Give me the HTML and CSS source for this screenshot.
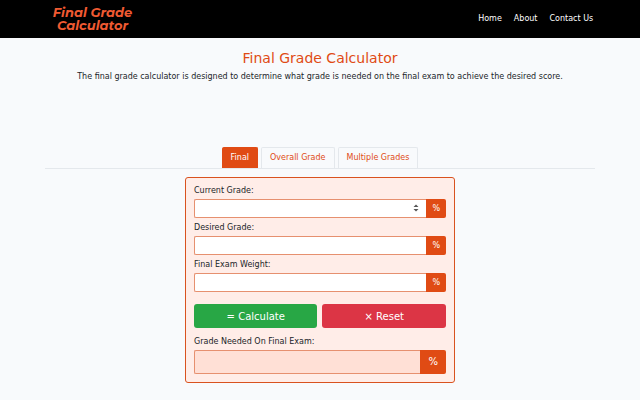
FILE: index.html
```html
<!DOCTYPE html>
<html lang="en">
<head>
  <meta charset="utf-8">
  <meta name="viewport" content="width=device-width, initial-scale=1">
  <title>Final Grade Calculator</title>
  <link rel="stylesheet" href="styles.css">
</head>
<body>
  <header class="topbar">
    <div class="container topbar-inner">
      <a class="logo" href="#">Final Grade<br>Calculator</a>
      <nav class="menu">
        <a href="#">Home</a>
        <a href="#">About</a>
        <a href="#">Contact Us</a>
      </nav>
    </div>
  </header>

  <main class="container">
    <div class="intro">
      <h1 class="title">Final Grade Calculator</h1>
      <p>The final grade calculator is designed to determine what grade is needed on the final exam to achieve the desired score.</p>
    </div>

    <nav class="tabs">
      <a class="tab active" href="#final">Final</a>
      <a class="tab" href="#overall">Overall Grade</a>
      <a class="tab" href="#multiple">Multiple Grades</a>
    </nav>

    <form class="calculator" id="final">
      <label for="current">Current Grade:</label>
      <div class="field">
        <input type="number" id="current">
        <svg class="spinner" viewBox="0 0 6 8" aria-hidden="true">
          <path d="M0.5 3L3 0.5L5.5 3ZM0.5 5L3 7.5L5.5 5Z"/>
        </svg>
        <span class="unit">%</span>
      </div>

      <label for="desired">Desired Grade:</label>
      <div class="field">
        <input type="number" id="desired">
        <span class="unit">%</span>
      </div>

      <label for="weight">Final Exam Weight:</label>
      <div class="field">
        <input type="number" id="weight">
        <span class="unit">%</span>
      </div>

      <div class="buttons">
        <button type="button" class="btn calculate">= Calculate</button>
        <button type="reset" class="btn reset">× Reset</button>
      </div>

      <label for="result">Grade Needed On Final Exam:</label>
      <div class="field large">
        <input type="text" id="result" readonly>
        <span class="unit">%</span>
      </div>
    </form>
  </main>
</body>
</html>
```

FILE: styles.css
```css
* {
  box-sizing: border-box;
}

body {
  margin: 0;
  background-color: #f8fafc;
  color: #212529;
  font-family: "DejaVu Sans", sans-serif;
  font-size: 8px;
  line-height: 12px;
}

a {
  text-decoration: none;
}

.container {
  width: 86%;
  margin: 0 auto;
}

/* Header */
.topbar {
  background-color: #000;
}

.topbar-inner {
  display: flex;
  align-items: center;
  justify-content: space-between;
  height: 38px;
  padding: 0 2px 0 8px;
}

.logo {
  color: #f05a32;
  font-family: Montserrat, Inter, sans-serif;
  font-size: 13px;
  font-style: italic;
  font-weight: 700;
  line-height: 13px;
  text-align: center;
}

.menu {
  display: flex;
  gap: 12px;
}

.menu a {
  color: #fff;
}

/* Intro */
.intro {
  min-height: 109px;
  padding-top: 12px;
  text-align: center;
}

.title {
  margin: 0 0 4px;
  color: #e04b14;
  font-size: 14px;
  font-weight: 400;
  line-height: 17px;
}

.intro p {
  margin: 0;
}

/* Tabs */
.tabs {
  display: flex;
  justify-content: center;
  gap: 3px;
  border-bottom: 1px solid #e4e8ec;
}

.tab {
  padding: 4px 8px;
  border: 1px solid #e4e8ec;
  border-bottom: 0;
  border-radius: 2px 2px 0 0;
  color: #e04b14;
}

.tab.active {
  border-color: #e04b14;
  background-color: #e04b14;
  color: #fff;
}

/* Calculator */
.calculator {
  width: 270px;
  margin: 8px auto 0;
  padding: 7px 8px 8px;
  border: 1px solid #d9521f;
  border-radius: 3px;
  background-color: #ffede8;
}

label {
  display: block;
  margin-bottom: 2px;
}

.field {
  position: relative;
  display: flex;
  height: 19px;
  margin-bottom: 4px;
}

.field input {
  flex: 1;
  min-width: 0;
  padding: 0 6px;
  border: 1px solid #e6906f;
  border-right: 0;
  border-radius: 2px 0 0 2px;
  background-color: #fff;
  color: #212529;
  font: inherit;
  appearance: textfield;
}

.unit {
  display: flex;
  align-items: center;
  padding: 0 6px;
  border-radius: 0 2px 2px 0;
  background-color: #e04b14;
  color: #fff;
}

.spinner {
  position: absolute;
  top: 5px;
  right: 27px;
  width: 6px;
  height: 8px;
  fill: #555;
}

.large {
  height: 24px;
  margin-bottom: 0;
  font-size: 10px;
}

.large input {
  background-color: #ffe0d6;
}

.large .unit {
  padding: 0 8px;
}

/* Buttons */
.buttons {
  display: flex;
  gap: 5px;
  margin: 12px 0 8px;
}

.btn {
  flex: 1;
  height: 24px;
  padding: 0;
  border: 0;
  border-radius: 3px;
  color: #fff;
  font-family: inherit;
  font-size: 10px;
  cursor: pointer;
}

.calculate {
  background-color: #28a745;
}

.reset {
  background-color: #dc3545;
}
```
